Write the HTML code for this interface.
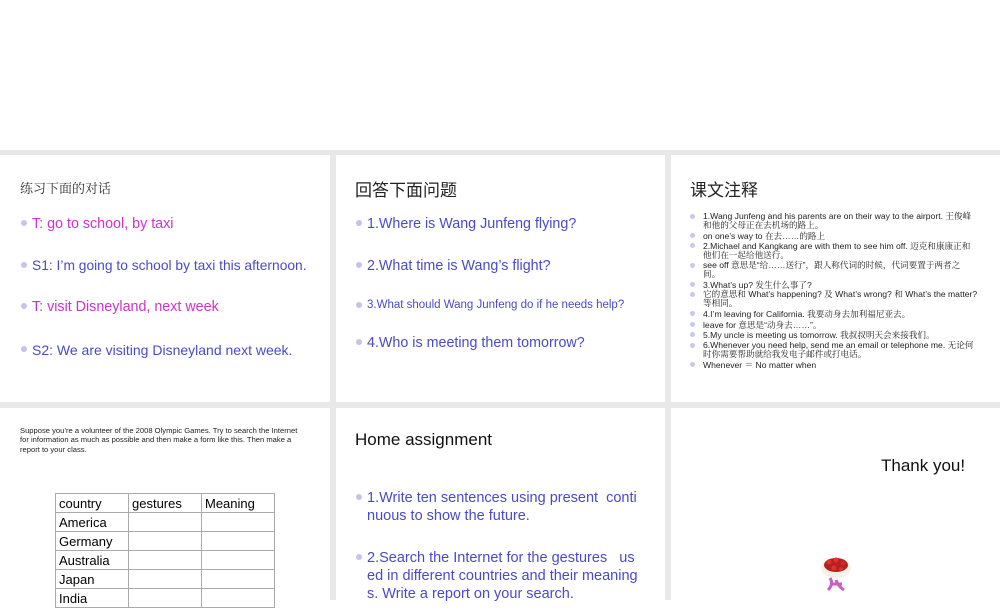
<!DOCTYPE html>
<html><head><meta charset="utf-8"><style>
*{margin:0;padding:0;box-sizing:border-box}
body{width:1000px;height:600px;overflow:hidden;background:#fff;position:relative;font-family:"Liberation Sans","Noto Sans CJK SC",sans-serif}
.g{position:absolute;background:#e8e8e8}
.a{position:absolute;white-space:nowrap}
.b{position:absolute;width:6px;height:6px;border-radius:50%;background:#c4c4ec}
.m{color:#cc33cc}.u{color:#4a4ac8}
.s{position:absolute;width:5px;height:5px;border-radius:50%;background:#c8c8ec}
.n{position:absolute;font-size:8.6px;line-height:8.5px;color:#222;left:703px;white-space:nowrap;font-family:"Liberation Sans","Noto Serif CJK SC",serif}
table{position:absolute;left:55px;top:493px;border-collapse:collapse;font-size:13px}
td{border:1px solid #aaa;height:19px;padding:0 3px;width:73px;line-height:17px}
</style></head><body>
<div class="g" style="left:0;top:150px;width:1000px;height:5px"></div>
<div class="g" style="left:0;top:402px;width:1000px;height:6px"></div>
<div class="g" style="left:330px;top:150px;width:6px;height:450px"></div>
<div class="g" style="left:665px;top:150px;width:6px;height:450px"></div>

<div class="a" style="left:20px;top:178px;font-size:13px;color:#333;font-family:'Noto Serif CJK SC',serif">练习下面的对话</div>
<div class="b" style="left:21px;top:220px"></div><div class="a m" style="left:32px;top:216px;font-size:14.3px">T: go to school, by taxi</div>
<div class="b" style="left:21px;top:262px"></div><div class="a u" style="left:32px;top:258px;font-size:13.8px">S1: I’m going to school by taxi this afternoon.</div>
<div class="b" style="left:21px;top:303px"></div><div class="a m" style="left:32px;top:299px;font-size:14.3px">T: visit Disneyland, next week</div>
<div class="b" style="left:21px;top:346px"></div><div class="a u" style="left:32px;top:342px;font-size:14px">S2: We are visiting Disneyland next week.</div>

<div class="a" style="left:355px;top:176px;font-size:17px;color:#222">回答下面问题</div>
<div class="b" style="left:356px;top:220px"></div><div class="a u" style="left:367px;top:216px;font-size:14.3px">1.Where is Wang Junfeng flying?</div>
<div class="b" style="left:356px;top:262px"></div><div class="a u" style="left:367px;top:258px;font-size:14.3px">2.What time is Wang’s flight?</div>
<div class="b" style="left:356px;top:302px"></div><div class="a u" style="left:367px;top:299px;font-size:11.5px">3.What should Wang Junfeng do if he needs help?</div>
<div class="b" style="left:356px;top:339px"></div><div class="a u" style="left:367px;top:335px;font-size:14.3px">4.Who is meeting them tomorrow?</div>

<div class="a" style="left:690px;top:176px;font-size:17px;color:#222">课文注释</div>
<div class="s" style="left:690px;top:214px"></div><div class="n" style="top:212px">1.Wang Junfeng and his parents are on their way to the airport. 王俊峰<br>和他的父母正在去机场的路上。</div>
<div class="s" style="left:690px;top:233px"></div><div class="n" style="top:232px">on one’s way to 在去……的路上</div>
<div class="s" style="left:690px;top:243px"></div><div class="n" style="top:242px">2.Michael and Kangkang are with them to see him off. 迈克和康康正和<br>他们在一起给他送行。</div>
<div class="s" style="left:690px;top:263px"></div><div class="n" style="top:261px">see off 意思是“给……送行”，跟人称代词的时候，代词要置于两者之<br>间。</div>
<div class="s" style="left:690px;top:282px"></div><div class="n" style="top:281px">3.What’s up? 发生什么事了?</div>
<div class="s" style="left:690px;top:292px"></div><div class="n" style="top:290px">它的意思和 What’s happening? 及 What’s wrong? 和 What’s the matter?<br>等相同。</div>
<div class="s" style="left:690px;top:311px"></div><div class="n" style="top:310px">4.I’m leaving for California. 我要动身去加利福尼亚去。</div>
<div class="s" style="left:690px;top:322px"></div><div class="n" style="top:321px">leave for 意思是“动身去……”。</div>
<div class="s" style="left:690px;top:332px"></div><div class="n" style="top:331px">5.My uncle is meeting us tomorrow. 我叔叔明天会来接我们。</div>
<div class="s" style="left:690px;top:343px"></div><div class="n" style="top:341px">6.Whenever you need help, send me an email or telephone me. 无论何<br>时你需要帮助就给我发电子邮件或打电话。</div>
<div class="s" style="left:690px;top:362px"></div><div class="n" style="top:361px">Whenever ＝ No matter when</div>

<div style="position:absolute;left:20px;top:426px;white-space:nowrap;font-size:7.6px;line-height:9.3px;color:#222">Suppose you’re a volunteer of the 2008 Olympic Games. Try to search the Internet<br>for information as much as possible and then make a form like this. Then make a<br>report to your class.</div>
<table>
<tr><td>country</td><td>gestures</td><td>Meaning</td></tr>
<tr><td>America</td><td></td><td></td></tr>
<tr><td>Germany</td><td></td><td></td></tr>
<tr><td>Australia</td><td></td><td></td></tr>
<tr><td>Japan</td><td></td><td></td></tr>
<tr><td>India</td><td></td><td></td></tr>
</table>

<div class="a" style="left:355px;top:430px;font-size:17px;color:#111">Home assignment</div>
<div class="b" style="left:356px;top:494px"></div><div style="position:absolute;left:367px;top:489px;white-space:nowrap;font-size:14.5px;line-height:18px" class="u">1.Write ten sentences using present&nbsp; conti<br>nuous to show the future.</div>
<div class="b" style="left:356px;top:554px"></div><div style="position:absolute;left:367px;top:549px;white-space:nowrap;font-size:14.5px;line-height:18px" class="u">2.Search the Internet for the gestures&nbsp;&nbsp; us<br>ed in different countries and their meaning<br>s. Write a report on your search.</div>

<div class="a" style="left:881px;top:456px;font-size:17px;color:#111">Thank you!</div>
<svg style="position:absolute;left:812px;top:550px" width="48" height="50">
<ellipse cx="24" cy="18" rx="15" ry="10" fill="#f2f2ea"/>
<ellipse cx="24" cy="15" rx="12" ry="7" fill="#b82020"/>
<circle cx="17" cy="12" r="2.5" fill="#e03030"/><circle cx="24" cy="10" r="2.5" fill="#e03030"/><circle cx="31" cy="13" r="2.5" fill="#d02828"/><circle cx="22" cy="18" r="2.5" fill="#e03030"/><circle cx="29" cy="19" r="2" fill="#d03030"/>
<path d="M18 28 Q22 34 16 40 M24 30 Q26 36 32 40 M20 34 L30 34" stroke="#c860c8" stroke-width="3" fill="none"/>
</svg>
</body></html>
